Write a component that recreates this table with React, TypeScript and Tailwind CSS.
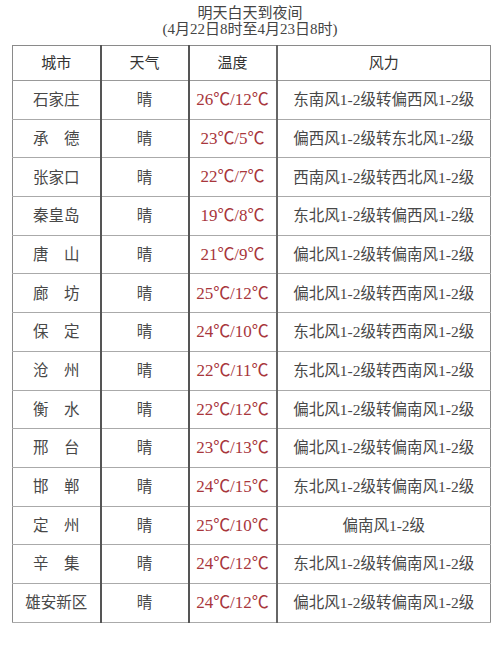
import React from "react";

const rows = [
  ["石家庄", "26℃/12℃", "东南风1-2级转偏西风1-2级"],
  ["承　德", "23℃/5℃", "偏西风1-2级转东北风1-2级"],
  ["张家口", "22℃/7℃", "西南风1-2级转西北风1-2级"],
  ["秦皇岛", "19℃/8℃", "东北风1-2级转偏西风1-2级"],
  ["唐　山", "21℃/9℃", "偏北风1-2级转偏南风1-2级"],
  ["廊　坊", "25℃/12℃", "偏北风1-2级转西南风1-2级"],
  ["保　定", "24℃/10℃", "东北风1-2级转西南风1-2级"],
  ["沧　州", "22℃/11℃", "东北风1-2级转西南风1-2级"],
  ["衡　水", "22℃/12℃", "偏北风1-2级转偏南风1-2级"],
  ["邢　台", "23℃/13℃", "偏北风1-2级转偏南风1-2级"],
  ["邯　郸", "24℃/15℃", "东北风1-2级转偏南风1-2级"],
  ["定　州", "25℃/10℃", "偏南风1-2级"],
  ["辛　集", "24℃/12℃", "东北风1-2级转偏南风1-2级"],
  ["雄安新区", "24℃/12℃", "偏北风1-2级转偏南风1-2级"],
];

const font = { fontFamily: '"Liberation Serif", "Noto Sans CJK SC", serif' };

export default function App() {
  return (
    <div className="w-[500px] h-[646px] bg-white text-[#333]" style={font}>
      <div className="pt-[5px] text-center text-[15px] leading-[16px] text-[#444]">
        <p>明天白天到夜间</p>
        <p>(4月22日8时至4月23日8时)</p>
      </div>
      <table className="ml-[12px] mt-[8px] w-[478px] border-collapse table-fixed border border-[#8a8a8a]">
        <colgroup>
          <col className="w-[88px]" />
          <col className="w-[88px]" />
          <col className="w-[88px]" />
          <col className="w-[214px]" />
        </colgroup>
        <thead>
          <tr className="h-[35px] text-[15px] text-[#333]">
            <th className="font-normal border-r-2 border-r-[#555] border-b border-b-[#999]">城市</th>
            <th className="font-normal border-r-2 border-r-[#555] border-b border-b-[#999]">天气</th>
            <th className="font-normal border-r-2 border-r-[#666] border-b border-b-[#999]">温度</th>
            <th className="font-normal border-b border-b-[#999]">风力</th>
          </tr>
        </thead>
        <tbody>
          {rows.map(([city, temp, wind]) => (
            <tr key={city} className="h-[38.7px] text-[15.5px] text-[#484848]">
              <td className="text-center whitespace-nowrap border-r-2 border-r-[#555] border-b border-b-[#aaa]">{city}</td>
              <td className="text-center border-r-2 border-r-[#555] border-b border-b-[#aaa]">晴</td>
              <td className="text-center whitespace-nowrap text-[17px] text-[#a8363c] border-r-2 border-r-[#666] border-b border-b-[#aaa]">{temp}</td>
              <td className="text-center whitespace-nowrap border-b border-b-[#aaa]">{wind}</td>
            </tr>
          ))}
        </tbody>
      </table>
    </div>
  );
}
